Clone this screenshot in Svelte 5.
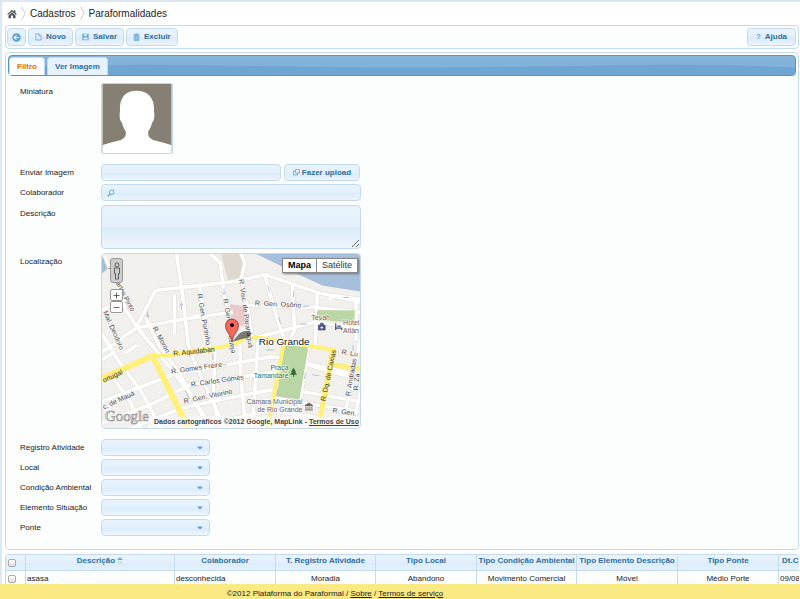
<script>
  const selects = ['Registro Atividade', 'Local', 'Condição Ambiental', 'Elemento Situação', 'Ponte'];
  const columns = [
    ['Colaborador', 'desconhecida', 101],
    ['T. Registro Atividade', 'Moradia', 100],
    ['Tipo Local', 'Abandono', 101],
    ['Tipo Condição Ambiental', 'Movimento Comercial', 100],
    ['Tipo Elemento Descrição', 'Móvel', 101],
    ['Tipo Ponte', 'Médio Porte', 101],
    ['Dt.C', '09/08', 20]
  ];
  const roads = [
    'M104 255L112 278L117 286L125 310L137 328L155 350L170 368L190 395L212 429',
    'M176 253L182 293L188 345L191 352',
    'M361 302L318 292L265 274L235 281L155 290L135 328L113 344L101 352',
    'M101 310L116 302',
    'M101 334L117 360L142 394L160 429',
    'M135 328L182 319L233 312',
    'M199 283L210 349',
    'M210 253L220 262L225 300L232 345',
    'M241 253L245 262L241 280L248 310L253 340',
    'M246 305L316 307L361 312',
    'M265 275L275 310L284 338',
    'M293 285L295 330L290 340',
    'M318 292L316 345',
    'M255 338L316 322L361 328',
    'M330 300L334 295L361 299M357 299L357 340',
    'M101 402L172 375L270 357L284 358L361 380',
    'M101 424L150 405L190 385L275 372',
    'M130 429L180 409L220 400L273 390',
    'M190 429L270 411L361 424',
    'M145 317L158 345L178 372L200 412L207 429',
    'M190 352L202 380L219 416L225 429',
    'M174 295V334M193 316L199 315',
    'M215 350L213 400L220 429',
    'M240 345L241 380L246 429',
    'M258 342L256 380L252 429',
    'M309 347L301 398L294 429',
    'M301 362L361 376',
    'M302 392L361 402',
    'M272 398L300 403L361 412',
    'M361 340L354 380L342 429',
    'M361 392L354 429',
    'M101 360L112 353M112 378L130 403L140 429',
    'M125 353L136 345'
  ];
  const labels = [
    [107, 268, 'Av. Carlos Pinto', 62],
    [102, 312, 'Mal. Deodoro', 66],
    [152, 328, 'R. Moron', 62],
    [197, 294, 'R. Gen. Portinho', 80],
    [223, 299, 'R. Gen. Neto', 80],
    [239, 279, 'R. Visc. de Paranaguá', 82],
    [255, 305, 'R. Gen. Osório', 3],
    [171, 374, 'R. Gomes Freire', -8],
    [191, 387, 'R. Carlos Gomes', -8],
    [184, 404, 'R. Gen. Vitorino', -12],
    [103, 410, 'c. de Mauá', -25],
    [342, 354, 'R. Lu', 10],
    [351, 397, 'R. Andradas', -80],
    [333, 413, 'R. Gen.', 8],
    [359, 391, 'R. Za', -85],
    [235, 353, 'elarro', -100]
  ];
</script>

<div class="page">
  <nav class="crumbs" aria-label="Navegação">
    <a href="#inicio" aria-label="Início">
      <svg width="10" height="10" viewBox="0 0 10 10"><path fill="#555" d="M5 .7L7 2.5V1.2h1.4v2.6L9.8 5.200 9 6 5 2.400 1 6 .2 5.200zM5 3.300L8.500 6.500V9.300H6V6.500H4v2.800H1.500V6.500z" /></svg>
    </a>
    <svg width="5" height="13" viewBox="0 0 5 13"><path d="M.5 0L4.200 6.500.5 13" fill="none" stroke="#ccc" /></svg>
    <a href="#cadastros">Cadastros</a>
    <svg width="5" height="13" viewBox="0 0 5 13"><path d="M.5 0L4.200 6.500.5 13" fill="none" stroke="#ccc" /></svg>
    <a href="#paraformalidades">Paraformalidades</a>
  </nav>

  <div class="toolbar">
    <button class="btn square" aria-label="Voltar">
      <svg width="9" height="9" viewBox="0 0 9 9"><circle cx="4.500" cy="4.500" r="4.200" fill="#5c9fd0" /><path d="M7 4.500H2.500M4.500 2.300L2.300 4.500 4.500 6.700" fill="none" stroke="#fff" stroke-width="1.200" /></svg>
    </button>
    <button class="btn">
      <svg width="7" height="8" viewBox="0 0 7 8"><path d="M.8.8H4L6.200 3V7H.8zM4 .8V3h2.200" fill="none" stroke="#6da8d5" stroke-width=".8" /></svg>Novo
    </button>
    <button class="btn">
      <svg width="7" height="8" viewBox="0 0 7 8"><path d="M.3.800h6.400v6.400h-6.400z" fill="#6da8d5" /><path d="M2 1.200h3V3H2zM1.500 4.500h4V6.500h-4z" fill="#e3f0fb" /></svg>Salvar
    </button>
    <button class="btn">
      <svg width="7" height="8" viewBox="0 0 7 8"><path d="M.5 1.500h6M2.500.700h2M1.200 2.500h4.600V7.400H1.200z" fill="#a8cce8" stroke="#6da8d5" stroke-width=".8" /><path d="M2.700 3v4M4.300 3v4" stroke="#5c9fd0" stroke-width=".6" /></svg>Excluir
    </button>
    <button class="btn help"><span class="q">?</span>Ajuda</button>
  </div>

  <main class="panel">
    <div class="tabbar" role="tablist">
      <svg class="wave" viewBox="0 0 788 20" preserveAspectRatio="none"><path d="M0 12Q100 8 210 10T400 12T590 10T788 12V20H0z" fill="#6ea5d1" /></svg>
      <button class="tab active" role="tab" aria-selected="true">Filtro</button>
      <button class="tab" role="tab" aria-selected="false">Ver Imagem</button>
    </div>

    <form class="form">
      <div class="row loose">
        <span class="label">Miniatura</span>
        <svg class="thumb" viewBox="0 0 71 71" role="img" aria-label="Miniatura">
          <rect width="71" height="71" fill="#858073" />
          <path fill="#fff" d="M0 71V63C7 60 15 59 20 57C24 55 24 53 24 49C22 46 21 44 20 40C18 38 17 33 18 28C17 14 24 7 35 7S54 14 53 28C54 33 53 38 51 40C50 44 49 46 47 49C47 53 47 55 51 57C56 59 64 60 71 63V71z" />
        </svg>
      </div>
      <div class="row">
        <label for="imagem">Enviar Imagem</label>
        <input id="imagem" class="field file" type="text" />
        <button class="btn upload" type="button">
          <svg width="7" height="7" viewBox="0 0 7 7"><path d="M2.500.5h4V4h-4zM2.500 2h-2v4h4V4" fill="none" stroke="#6da8d5" stroke-width=".8" /></svg>Fazer upload
        </button>
      </div>
      <div class="row">
        <label for="colaborador">Colaborador</label>
        <div class="wide over">
          <input id="colaborador" class="field" type="text" />
          <svg class="lens" width="8" height="8" viewBox="0 0 8 8"><path d="M3 5L.7 7.300" stroke="#5c9fd0" stroke-width="1.200" /><circle cx="4.800" cy="3.200" r="2.300" fill="none" stroke="#5c9fd0" stroke-width=".9" /></svg>
        </div>
      </div>
      <div class="row tall">
        <label for="descricao">Descrição</label>
        <textarea id="descricao" class="field wide"></textarea>
      </div>
      <div class="row tall loose">
        <span class="label">Localização</span>
        <div class="wide map">
          <svg class="streets" viewBox="101 253 260 176" preserveAspectRatio="xMidYMid slice">
            <rect x="101" y="253" width="260" height="176" fill="#f2f0ed" />
            <path d="M221 253H243L245 262L239 277L228 280z" fill="#dfd8cf" />
            <path d="M256 253L297 273L323 285L361 291V253zM101 255L107 268L101 273z" fill="#a5bfdd" />
            <path d="M230 304L245 306L247 326L231 325z" fill="#eac8cc" />
            {#each roads as d}<path {d} fill="none" stroke="#dedad4" stroke-width="4.600" />{/each}
            {#each roads as d}<path {d} fill="none" stroke="#fff" stroke-width="3.600" />{/each}
            <path d="M285 345L309 347L300 400L277 397zM318 310L356 310L355 322L317 320z" fill="#bad6a5" />
            <g fill="none" stroke="#fff07a">
              <path d="M100 379L152 356L172 355L233 345L246 338L262 338L310 346L336 350" stroke-width="4" />
              <path d="M100 379L152 356L188 429" stroke-width="6" />
              <path d="M334 348L323 408L318 429M334 365L361 369" stroke-width="5" />
              <path d="M284 344L268 429" stroke-width="4" />
            </g>
            <path d="M147 311v6m-1.500-2l1.500 2 1.500-2M181 303v6m-1.500-4l1.500-2 1.500 2M224 288v6m-1.500-2l1.500 2 1.500-2M268 285l2 7M279 317l2 7M294 291v6M303 306h7M300 324h8M344 297h6M172 366l3 6M185 391l4 8M213 354v6M220 365h7M266 350h8M277 396l1 -6M305 379l1 -6M313 375l7 1M354 345v6" fill="none" stroke="#9fb3cf" stroke-width=".8" />
            <g class="street">
              {#each labels as [x, y, text, turn]}
                <text {x} {y} transform="rotate({turn} {x} {y})">{text}</text>
              {/each}
              <g class="main">
                <text x="173" y="356" transform="rotate(-6 173 356)">R. Aquidaban</text>
                <text x="103" y="383" transform="rotate(-25 103 383)">ortugal</text>
                <text x="326" y="402" transform="rotate(-78 326 402)">R. Dq. de Caxias</text>
              </g>
            </g>
            <g class="place">
              <text x="312" y="320">Tevah</text>
              <text x="344" y="325">Hotel</text>
              <text x="344" y="333">Atlân</text>
              <g text-anchor="end">
                <text class="green" x="289" y="370">Praça</text>
                <text class="green" x="289" y="378">Tamandaré</text>
                <text x="303" y="405">Câmara Municipal</text>
                <text x="303" y="413">de Rio Grande</text>
              </g>
            </g>
            <path d="M294 368l2.500 4h-1l2 3H294.500v2h-1v-2H290.500l2-3h-1z" fill="#356b3a" />
            <path d="M319 325h7v5h-7zM321 325v-2h3v2" fill="#50577e" stroke="#50577e" stroke-width=".6" /><path d="M322.500 326v3M321 327.500h3" stroke="#fff" stroke-width=".8" />
            <path d="M336.500 323v7M336.500 328h6v2M338 326h4" fill="none" stroke="#50577e" stroke-width="1.300" />
            <path d="M305.500 406L309.500 403.500 313.500 406zM306.500 407v3M308.500 407v3M310.500 407v3M312.500 407v3M305.500 410.500h8" fill="#6d5a50" stroke="#6d5a50" stroke-width=".8" />
            <text class="city" x="259" y="345">Rio Grande</text>
            <path d="M232 342L240 333Q247 329 252 333Q250 338 242 339z" fill="#000" opacity=".5" />
            <path d="M232 342C231.500 335 225.500 332 225.500 325.500A6.500 6.500 0 0 1 238.500 325.500C238.500 332 232.500 335 232 342z" fill="#f7685c" stroke="#7b1c16" stroke-width=".7" />
            <circle cx="232" cy="325" r="2" fill="#000" />
            <rect x="147" y="417" width="214" height="12" fill="#fff" opacity=".55" />
            <text class="logo" x="104" y="422">Google</text>
          </svg>
          <div class="controls">
            <button class="peg" type="button" aria-label="Street View">
              <svg width="8" height="18" viewBox="0 0 8 18"><circle cx="4" cy="3" r="2" fill="#ccc" stroke="#444" stroke-width=".8" /><path d="M1.500 6h5v5.500H5.500V17h-3v-5.500h-1z" fill="#ccc" stroke="#444" stroke-width=".8" /></svg>
            </button>
            <button class="zoom" type="button" aria-label="Aproximar"><svg width="7" height="7" viewBox="0 0 7 7"><path d="M3.500.5v6M.5 3.500h6" stroke="#666" /></svg></button>
            <button class="zoom" type="button" aria-label="Afastar"><svg width="7" height="7" viewBox="0 0 7 7"><path d="M.5 3.500h6" stroke="#666" /></svg></button>
          </div>
          <div class="types">
            <button class="chosen" type="button">Mapa</button><button type="button">Satélite</button>
          </div>
          <div class="credits">Dados cartográficos ©2012 Google, MapLink - <a href="#termos-mapa">Termos de Uso</a></div>
        </div>
      </div>
      {#each selects as name, i}
        <div class="row">
          <label for="sel{i}">{name}</label>
          <div class="over choice">
            <select id="sel{i}" class="field"><option></option></select>
            <svg class="arrow" width="6" height="4" viewBox="0 0 6 4"><path d="M0 .5H6L3 3.500z" fill="#5c9fd0" /></svg>
          </div>
        </div>
      {/each}
    </form>
  </main>

  <div class="grid">
    <table>
      <colgroup>
        <col style="width:21px" /><col style="width:149px" />
        {#each columns as c}<col style="width:{c[2]}px" />{/each}
      </colgroup>
      <thead>
        <tr>
          <th><input type="checkbox" aria-label="Selecionar todos" /></th>
          <th>Descrição <svg class="sort" width="6" height="7" viewBox="0 0 6 7"><path d="M0 3H6L3 .3z" fill="#6da8d5" /><path d="M0 4.500H6L3 7z" fill="#b9d7ee" /></svg></th>
          {#each columns as c}<th>{c[0]}</th>{/each}
        </tr>
      </thead>
      <tbody>
        <tr>
          <td><input type="checkbox" aria-label="Selecionar asasa" /></td>
          <td class="left">asasa</td>
          {#each columns as c, i}<td class:left={i === 0}>{c[1]}</td>{/each}
        </tr>
      </tbody>
    </table>
  </div>

  <footer><p>©2012 Plataforma do Paraformal / <a href="#sobre">Sobre</a> / <a href="#termos">Termos de serviço</a></p></footer>
</div>

<style>
  :global(body) { background: #fff; }
  .page, .page * { box-sizing: border-box; }
  .page {
    min-height: 100vh;
    border-top: 2px solid #dbe9f5;
    border-left: 2px solid #dbe9f5;
    padding: 0 1px 0 3px;
    overflow: hidden;
    font: 8px/10px "Liberation Sans", Arial, sans-serif;
    color: #222;
  }
  button, input, select, textarea { font: inherit; margin: 0; }
  button { cursor: pointer; }
  .crumbs { display: flex; align-items: center; gap: 4px; height: 23px; padding-left: 2px; font-size: 10px; }
  .crumbs a { color: #222; text-decoration: none; }
  .crumbs svg { display: block; }
  .toolbar {
    display: flex;
    align-items: center;
    gap: 2px;
    height: 24px;
    padding: 0 2px 0 1px;
    border: 1px solid #c5dbec;
    border-radius: 4px;
    background: #fcfdfd;
  }
  .btn {
    display: inline-flex;
    align-items: center;
    gap: 4px;
    height: 18px;
    padding: 0 6px;
    border: 1px solid #c5dbec;
    border-radius: 4px;
    background: linear-gradient(#e8f3fc, #e3f0fb 50%, #d9ebfa 52%, #eaf4fd);
    color: #2e6e9e;
    font-weight: bold;
  }
  .square { width: 19px; padding: 0 4px; }
  .help { margin-left: auto; padding: 0 8px; }
  .q { color: #5c9fd0; }
  .panel { margin-top: 3px; padding: 2px; border: 1px solid #c5dbec; border-radius: 4px; background: #fcfdfd; }
  .tabbar {
    position: relative;
    display: flex;
    align-items: flex-end;
    gap: 2px;
    height: 21px;
    border: 1px solid #4f97cc;
    border-radius: 4px;
    background: linear-gradient(#86b4da, #80b0d8);
  }
  .wave { position: absolute; inset: 0; width: 100%; height: 100%; }
  .tab {
    position: relative;
    height: 18px;
    padding: 0 7px;
    border: 1px solid #c5dbec;
    border-bottom: 0;
    border-radius: 4px 4px 0 0;
    background: #e6f2fc;
    color: #2e6e9e;
    font-weight: bold;
  }
  .tab.active { background: #fafcfd; color: #e17009; }
  .form { display: flex; flex-direction: column; gap: 3px; padding: 7px 12px 11px; }
  .row { display: flex; align-items: flex-start; }
  .loose { margin-bottom: 7px; }
  .tall { margin-top: 1px; }
  label, .label { flex: none; width: 81px; line-height: 17px; }
  .thumb { width: 72px; height: 71px; border: 1px solid #c5dbec; border-radius: 2px; }
  .field {
    display: block;
    width: 100%;
    height: 17px;
    padding: 0 4px;
    border: 1px solid #c5dbec;
    border-radius: 4px;
    background: linear-gradient(#e8f3fc, #e3f0fb 50%, #d9ebfa 52%, #eef5fd);
    appearance: none;
    outline: none;
  }
  .file { width: 180px; }
  .upload { margin-left: 3px; height: 17px; width: 76px; padding: 0; justify-content: center; gap: 2px; }
  .wide { width: 260px; }
  textarea.field { height: 44px; resize: both; }
  .over { position: relative; }
  .lens { position: absolute; left: 6px; top: 5px; }
  .choice { width: 109px; }
  .arrow { position: absolute; right: 7px; top: 7px; pointer-events: none; }
  .map { position: relative; height: 176px; border-radius: 4px; overflow: hidden; border: 1px solid #c5dbec; }
  .streets { display: block; width: 100%; height: 100%; }
  .street text { font-size: 7px; fill: #444; stroke: #fff; stroke-width: 1px; paint-order: stroke; }
  .street .main text { fill: #333; stroke: #fff07a; }
  .place text { font-size: 7px; fill: #6d5a50; stroke: #fff; stroke-width: 1px; paint-order: stroke; }
  .place text.green { fill: #356b3a; }
  .city { font-size: 10px; fill: #111; stroke: #fff; stroke-width: 2px; paint-order: stroke; }
  .logo { font: 15px "Liberation Serif", serif; fill: #f4f2ee; stroke: #999; stroke-width: .7px; }
  .controls { position: absolute; left: 8px; top: 4px; display: flex; flex-direction: column; }
  .controls button { display: flex; align-items: center; justify-content: center; padding: 0; border: 1px solid #999; }
  .controls .peg { width: 13px; height: 25px; margin-bottom: 6px; border-radius: 3px; background: #ccc; }
  .controls .zoom { width: 13px; height: 12px; background: #fff; border-radius: 2px; }
  .types { position: absolute; right: 2px; top: 4px; display: flex; box-shadow: 1px 1px 2px #777; border: 1px solid #888; }
  .types button { height: 13px; padding: 0 5px; border: 0; background: #fff; color: #333; font-size: 9px; line-height: 13px; }
  .types .chosen { border-right: 1px solid #888; color: #000; font-weight: bold; }
  .credits { position: absolute; right: 1px; bottom: 1px; font-size: 7px; font-weight: bold; color: #444; white-space: nowrap; }
  .credits a { color: #444; }
  .grid { margin-top: 4px; overflow: hidden; border: solid #c5dbec; border-width: 1px 0 0; border-radius: 4px 4px 0 0; }
  table { width: 100%; table-layout: fixed; border-collapse: separate; border-spacing: 0; }
  th, td { padding: 0 1px; border-right: 1px solid #c5dbec; white-space: nowrap; overflow: hidden; text-align: center; }
  th:first-child, td:first-child { border-left: 1px solid #c5dbec; text-align: left; }
  th { height: 16px; padding-bottom: 3px; border-bottom: 1px solid #c5dbec; background: linear-gradient(#e8f3fc, #e3f0fb 50%, #d9ebfa 52%, #e6f2fc); color: #2e6e9e; }
  td { height: 15px; background: #fcfdfd; }
  th:last-child, td:last-child { border-right: 0; padding-right: 0; text-align: left; }
  th:last-child { padding-left: 3px; }
  td.left { text-align: left; }
  .sort { vertical-align: -1px; }
  input[type="checkbox"] {
    display: block;
    width: 8px;
    height: 8px;
    margin-left: 1px;
    border: 1px solid #aaa;
    border-radius: 2px;
    appearance: none;
    background: linear-gradient(#fff, #ddd);
  }
  th input[type="checkbox"] { margin-top: 3px; }
  footer { position: fixed; left: 0; right: 0; bottom: 0; height: 15px; padding-right: 130px; background: #fbe983; text-align: center; }
  footer p { margin: 0; line-height: 19px; }
  footer a { color: #222; }
</style>
